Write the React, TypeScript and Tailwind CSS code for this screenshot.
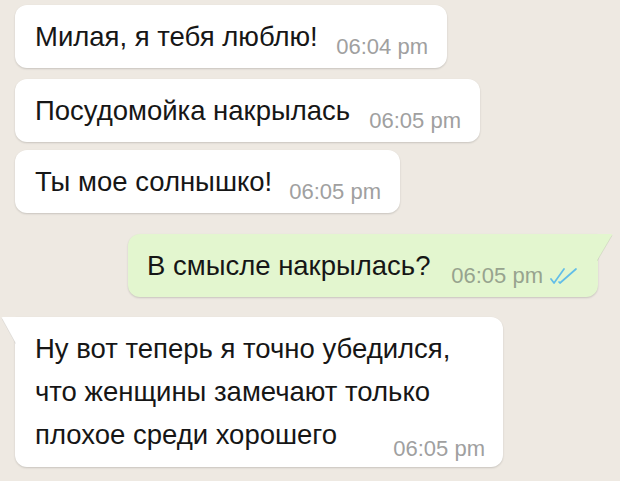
const font = { fontFamily: '"Liberation Sans", Arial, sans-serif' }

function Ticks() {
  return (
    <svg width="28" height="18" viewBox="0 0 28 18" fill="none" stroke="#62bde8" strokeWidth="1.7" strokeLinecap="round" strokeLinejoin="round">
      <path d="M1 12 L4 16 L14 2" />
      <path d="M9 15 L10 16 L26 2" />
    </svg>
  )
}

function Bubble({ text, time, width }: { text: string; time: string; width: string }) {
  return (
    <div className={`flex items-start justify-between rounded-[12px] bg-white pl-[20px] pr-[19px] pt-[14px] pb-[10px] shadow-[0_1px_2px_rgba(0,0,0,0.16)] ${width}`}>
      <span className="text-[27.5px] leading-[36px] text-[#161616] whitespace-nowrap">{text}</span>
      <span className="mt-[17px] text-[22px] leading-[22px] text-[#a0a0a0] whitespace-nowrap">{time}</span>
    </div>
  )
}

export default function App() {
  return (
    <div className="min-h-screen w-[620px] h-[481px] overflow-hidden bg-[#eee9e2] pt-[5px] pl-[15px]" style={font}>
      <div className="flex flex-col items-start">
        <Bubble text="Милая, я тебя люблю!" time="06:04 pm" width="w-[432px]" />
        <div className="mt-[11px]">
          <Bubble text="Посудомойка накрылась" time="06:05 pm" width="w-[465px]" />
        </div>
        <div className="mt-[8px]">
          <Bubble text="Ты мое солнышко!" time="06:05 pm" width="w-[385px]" />
        </div>

        {/* outgoing */}
        <div className="relative mt-[21px] ml-[113px]">
          <div className="flex w-[470px] items-start justify-between rounded-[12px] rounded-tr-none bg-[#e3f6cf] pl-[19px] pr-[20px] pt-[14px] pb-[10px] shadow-[0_1px_2px_rgba(0,0,0,0.16)]">
            <span className="text-[27.5px] leading-[36px] text-[#161616] whitespace-nowrap">В смысле накрылась?</span>
            <span className="mt-[17px] flex h-[22px] items-center gap-[7px]">
              <span className="text-[22px] leading-[22px] text-[#97a38e] whitespace-nowrap">06:05 pm</span>
              <Ticks />
            </span>
          </div>
          <svg className="absolute right-[-15px] top-0" width="16" height="28" viewBox="0 0 16 28">
            <path d="M0 0 L14 0 Q16 0 15 1.5 L0 27 Z" fill="#e3f6cf" />
            <path d="M15 1.5 L0 27" stroke="rgba(0,0,0,0.08)" strokeWidth="1" />
          </svg>
        </div>

        {/* incoming long */}
        <div className="relative mt-[20px]">
          <svg className="absolute left-[-14px] top-0" width="15" height="28" viewBox="0 0 15 28">
            <path d="M15 0 L2 0 Q0 0 1 1.5 L15 27 Z" fill="#ffffff" />
            <path d="M1 1.5 L15 27" stroke="rgba(0,0,0,0.08)" strokeWidth="1" />
          </svg>
          <div className="w-[488px] rounded-[12px] rounded-tl-none bg-white pl-[20px] pr-[18px] pt-[10px] pb-[11px] text-[27.5px] leading-[43px] text-[#161616] shadow-[0_1px_2px_rgba(0,0,0,0.16)]">
            <div className="whitespace-nowrap">Ну вот теперь я точно убедился,</div>
            <div className="whitespace-nowrap">что женщины замечают только</div>
            <div className="flex items-end justify-between">
              <span className="whitespace-nowrap">плохое среди хорошего</span>
              <span className="text-[22px] leading-[15px] text-[#a0a0a0] whitespace-nowrap">06:05 pm</span>
            </div>
          </div>
        </div>
      </div>
    </div>
  )
}
